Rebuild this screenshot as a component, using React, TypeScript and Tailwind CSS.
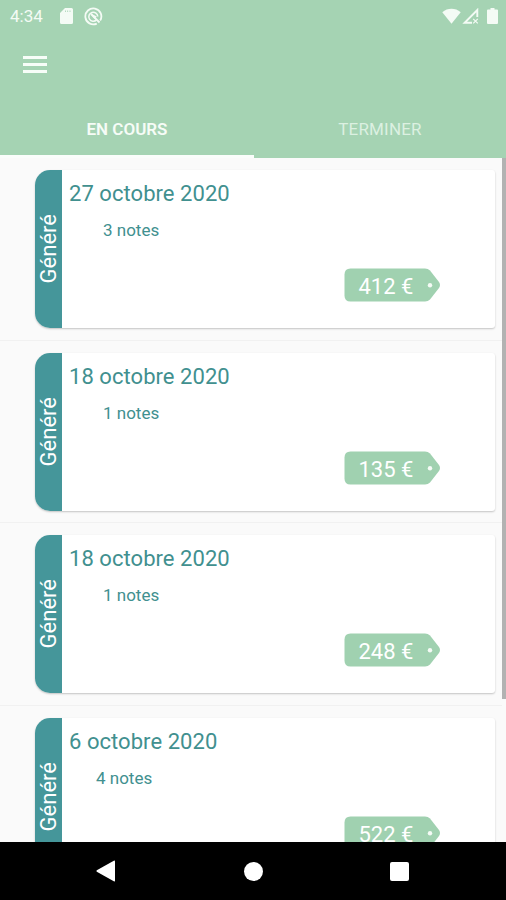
const notes = [
  { date: "27 octobre 2020", count: "3 notes", price: "412 €", indent: "pl-[34px]" },
  { date: "18 octobre 2020", count: "1 notes", price: "135 €", indent: "pl-[34px]" },
  { date: "18 octobre 2020", count: "1 notes", price: "248 €", indent: "pl-[34px]" },
  { date: "6 octobre 2020", count: "4 notes", price: "522 €", indent: "pl-[27px]" },
];

function StatusBar() {
  return (
    <div className="flex h-8 items-center pl-[10px] pr-[8px] text-[#f4fbf5]">
      <span className="w-[50px] text-[17px] leading-8">4:34</span>
      <svg className="h-4 w-[13px]" viewBox="0 0 13 16" fill="currentColor">
        <path
          fillRule="evenodd"
          d="M5 0h6.500a1.500 1.500 0 0 1 1.500 1.500v13a1.500 1.500 0 0 1-1.500 1.500h-10A1.500 1.500 0 0 1 0 14.500V5zM5 2.500v1.500h.8v-1.500zM7.300 2.500v1.500h.8v-1.500zM9.600 2.500v1.500h.8v-1.500z"
        />
      </svg>
      <svg className="ml-[11px] h-[19px] w-[19px]" viewBox="0 0 19 19" fill="none" stroke="currentColor">
        <path d="M12.800 16.600a8 8 0 1 1 3.400-3.100" strokeWidth="1.800" />
        <path d="M12.500 12.900a4.500 4.500 0 1 1 1.300-3.400" strokeWidth="1.500" />
        <path d="M7 7 15.500 15.500" strokeWidth="1.800" />
        <path d="M6.300 6.300 12.800 9.500 10.500 12z" fill="currentColor" stroke="none" />
      </svg>
      <svg className="ml-auto h-4 w-[19px]" viewBox="0 0 19 16" fill="currentColor">
        <path d="M.3 4.300C5.500-.3 13.500-.3 18.700 4.300L9.500 15.700z" />
      </svg>
      <svg className="ml-[1px] h-4 w-[18px]" viewBox="0 0 18 16" fill="none" stroke="currentColor">
        <path d="M15.300 9V2L2.600 14.800H10" strokeWidth="1.900" />
        <path d="m11.200 10.800 4.600 4.600m0-4.600-4.600 4.600" strokeWidth="1.200" />
      </svg>
      <svg className="ml-[7px] h-4 w-[11px]" viewBox="0 0 11 16" fill="currentColor">
        <path d="M3.500 0h4v1.500H10a1 1 0 0 1 1 1V15a1 1 0 0 1-1 1H1a1 1 0 0 1-1-1V2.500a1 1 0 0 1 1-1h2.500z" />
      </svg>
    </div>
  );
}

function PriceTag({ price }: { price: string }) {
  return (
    <div className="relative h-[34px] w-[97px]">
      <svg className="absolute inset-0" width="97" height="34" viewBox="0 0 97 34">
        <path
          d="M6.500 .5H81Q84 .5 86 2.500L95 14Q97 17 95 20L86 31.500Q84 33.500 81 33.500H6.500Q.5 33.500 .5 27.500V6.500Q.5 .5 6.500 .5Z"
          fill="#a0d1b0"
        />
        <circle cx="86" cy="17.200" r="2.200" fill="#f5fbf6" />
      </svg>
      <span className="relative block whitespace-nowrap pl-[14.500px] text-[22px] leading-[37px] text-white">{price}</span>
    </div>
  );
}

export default function App() {
  return (
    <div className="flex h-[900px] w-[506px] flex-col overflow-hidden bg-[#fafafa] font-['Roboto','Liberation_Sans',sans-serif]">
      <header className="flex h-[158px] shrink-0 flex-col bg-[#a5d3b3]">
        <StatusBar />
        <div className="flex h-16 items-center pl-[23px]">
          <div className="flex w-6 flex-col gap-[4px]">
            <i className="h-[3px] bg-[#f7fdf8]" />
            <i className="h-[3px] bg-[#f7fdf8]" />
            <i className="h-[3px] bg-[#f7fdf8]" />
          </div>
        </div>
        <nav className="flex h-[62px] text-center text-[17px] leading-[66px]">
          <div className="h-full w-[254px] border-b-[3px] border-[#fafdfb] font-semibold text-[#f6fcf7]">EN COURS</div>
          <div className="flex-1 tracking-[0.2px] text-[#dcf0e1]">TERMINER</div>
        </nav>
      </header>

      <main className="flex min-h-0 flex-1 overflow-hidden">
        <div className="w-[502px] shrink-0">
          {notes.map((note, i) => (
            <div key={i} className="h-[182.500px] border-b border-[#f1f1f1] pl-[35px] pr-[7px] pt-3">
              <article className="flex h-[158px] overflow-hidden rounded-l-[15px] rounded-r-[3px] bg-white shadow-[0px_1px_2px_rgba(0,0,0,0.22)]">
                <div className="flex w-[27px] items-center justify-center bg-[#45969a]">
                  <span className="rotate-180 text-[22px] leading-[27px] text-white [writing-mode:vertical-rl]">Généré</span>
                </div>
                <div className="flex-1 pl-[7px] pt-[9px] text-[#41908f]">
                  <h2 className="text-[22px] leading-[30px] tracking-[0.05px]">{note.date}</h2>
                  <p className={`mt-[9px] text-[17px] leading-6 ${note.indent}`}>{note.count}</p>
                  <div className="mt-[26px] pl-[275px]">
                    <PriceTag price={note.price} />
                  </div>
                </div>
              </article>
            </div>
          ))}
        </div>
        <div className="h-[541px] w-1 bg-[#b2b2b2]" />
      </main>

      <footer className="flex h-[58px] shrink-0 items-center bg-black">
        <svg className="ml-[96px] h-[22px] w-[19px]" viewBox="0 0 19 22" fill="white">
          <path d="M17.800.8Q19 .2 19 1.500V20.500Q19 21.800 17.800 21.200L.8 11.800Q0 11 .8 10.200Z" />
        </svg>
        <div className="ml-[129px] h-[19px] w-[19px] rounded-full bg-white" />
        <div className="ml-[127px] h-[19px] w-[19px] rounded-[2px] bg-white" />
      </footer>
    </div>
  );
}
